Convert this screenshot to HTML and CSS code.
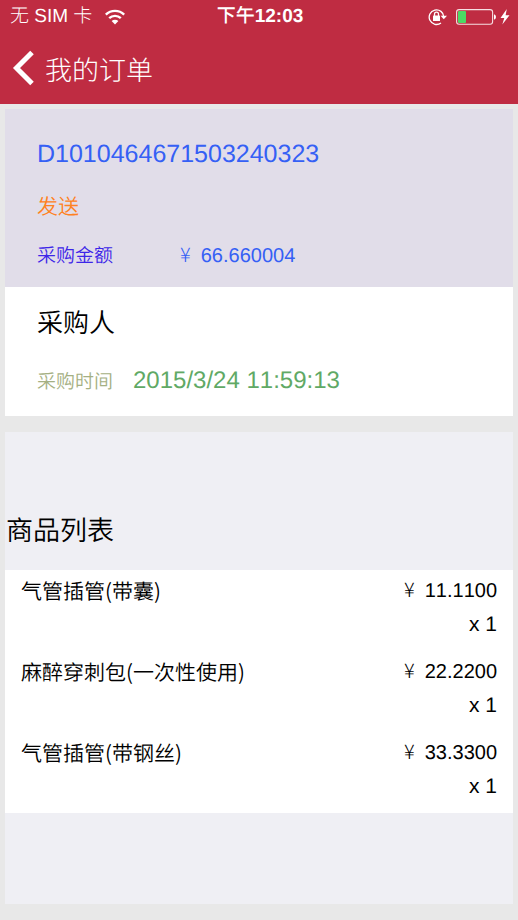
FILE: index.html
```html
<!DOCTYPE html>
<html lang="zh-CN">
<head>
<meta charset="utf-8">
<meta name="viewport" content="width=device-width, initial-scale=1">
<title>我的订单</title>
<link rel="stylesheet" href="styles.css">
</head>
<body>
<header class="top">
  <div class="status">
    <div class="status-left">
      <span>无 SIM 卡</span>
      <svg width="20" height="16" viewBox="0 0 20 16" fill="none" stroke="#fff" stroke-width="2.4" aria-hidden="true">
        <path d="M.8 5.6A13.2 13.2 0 0 1 19.200 5.600"/>
        <path d="M4.200 9.200A8.400 8.400 0 0 1 15.800 9.200"/>
        <path d="M10 15.400L6.600 12A4.900 4.900 0 0 1 13.400 12Z" fill="#fff" stroke="none"/>
      </svg>
    </div>
    <time class="clock"><span class="period">下午</span>12:03</time>
    <div class="status-right">
      <svg width="20" height="18" viewBox="0 0 20 18" fill="none" stroke="#fff" stroke-width="1.300" aria-hidden="true">
        <path d="M13 14.900A7.300 7.300 0 1 1 15.800 9"/>
        <path d="M12.600 7.700H19L15.800 11.300Z" fill="#fff" stroke="none"/>
        <rect x="5" y="7.600" width="7" height="5.400" rx=".6" fill="#fff" stroke="none"/>
        <path d="M6.500 8V6.200A2 2 0 0 1 10.500 6.200V8"/>
      </svg>
      <span class="power">
        <svg width="40" height="16" viewBox="0 0 40 16" fill="none" aria-hidden="true">
          <rect x=".6" y=".6" width="36" height="14.600" rx="2.500" stroke="#fff" stroke-opacity=".85" stroke-width="1.100"/>
          <rect x="2" y="2" width="8" height="12" rx="1" fill="#4cd964"/>
          <path d="M38 5.200Q40 5.800 40 8T38 10.800Z" fill="#fff"/>
        </svg>
        <svg width="10" height="16" viewBox="0 0 10 16" fill="#fff" aria-hidden="true">
          <path d="M6.800 0L.5 9H4.300L2.300 15.500L9.500 6.300H5.600Z"/>
        </svg>
      </span>
    </div>
  </div>
  <nav class="nav">
    <a class="back" href="#">
      <svg width="22" height="36" viewBox="0 0 22 36" fill="none" stroke="#fff" stroke-width="5" aria-hidden="true">
        <path d="M20 2.500L4.500 18L20 33.500"/>
      </svg>
      <span>我的订单</span>
    </a>
  </nav>
</header>
<main class="page">
  <section class="order">
    <div class="summary">
      <h1 class="order-id">D1010464671503240323</h1>
      <p class="state">发送</p>
      <dl class="amount">
        <dt>采购金额</dt>
        <dd><span class="yen">¥</span>66.660004</dd>
      </dl>
    </div>
    <div class="buyer">
      <h2 class="buyer-name">采购人</h2>
      <dl class="date">
        <dt>采购时间</dt>
        <dd>2015/3/24 11:59:13</dd>
      </dl>
    </div>
  </section>
  <section class="goods">
    <h2 class="goods-title">商品列表</h2>
    <ul class="items">
      <li class="item"><span class="name">气管插管(带囊)</span><span class="price"><span class="yen">¥</span>11.1100</span><span class="count">x 1</span></li>
      <li class="item"><span class="name">麻醉穿刺包(一次性使用)</span><span class="price"><span class="yen">¥</span>22.2200</span><span class="count">x 1</span></li>
      <li class="item"><span class="name">气管插管(带钢丝)</span><span class="price"><span class="yen">¥</span>33.3300</span><span class="count">x 1</span></li>
    </ul>
  </section>
</main>
</body>
</html>
```
FILE: styles.css
```css
* {
  box-sizing: border-box;
  margin: 0;
  padding: 0;
}

body {
  background: #e8e8e8;
  color: #000;
  font-family: "Liberation Sans", "Noto Sans CJK SC", sans-serif;
  font-weight: 350;
  font-kerning: none;
  text-rendering: geometricPrecision;
}

h1,
h2 {
  font-weight: 350;
}

svg {
  display: block;
  flex: none;
}

.top {
  background: #bf2c42;
  color: #fff;
  font-weight: 300;
}

.status {
  display: grid;
  grid-template-columns: 1fr auto 1fr;
  align-items: center;
  height: 34px;
  padding: 0 8px 0 10px;
  font-size: 19px;
  line-height: 34px;
}

.status-left,
.status-right,
.power {
  display: flex;
  align-items: center;
}

.status-left {
  gap: 13px;
}

.status-right {
  justify-content: flex-end;
  gap: 8px;
}

.power {
  gap: 4px;
}

.clock {
  font-weight: 600;
}

.period {
  font-weight: 500;
}

.nav {
  height: 70px;
  padding: 0 12px;
}

.back {
  display: inline-flex;
  align-items: center;
  gap: 11px;
  height: 68px;
  color: #fff;
  font-size: 27px;
  text-decoration: none;
}

.page {
  padding: 5px 5px 16px;
}

.order {
  background: #fff;
}

.summary {
  padding: 27px 32px 14px;
  background: #e1dde9;
}

.order-id {
  color: #3560f5;
  font-size: 25px;
  line-height: 36px;
}

.state {
  margin-top: 18px;
  color: #ff8122;
  font-size: 21px;
  line-height: 36px;
}

.amount,
.date {
  display: flex;
  align-items: baseline;
}

.amount {
  margin-top: 14px;
  gap: 67px;
  color: #3560f5;
  font-size: 20px;
  line-height: 32px;
}

.amount dt {
  color: #3d26e8;
  font-size: 19px;
}

.yen {
  margin-right: 10px;
  font-family: "Noto Sans CJK SC", sans-serif;
  font-size: 20px;
  font-weight: 300;
  line-height: 1;
}

.buyer {
  padding: 18px 32px 15px;
}

.buyer-name {
  font-size: 26px;
  line-height: 36px;
}

.date {
  margin-top: 22px;
  gap: 20px;
  color: #60a965;
  font-size: 24px;
  line-height: 36px;
}

.date dt {
  color: #a5b083;
  font-size: 19px;
}

.goods {
  margin-top: 16px;
  padding: 79px 0 91px;
  background: #efeff4;
}

.goods-title {
  padding: 0 1px 19px;
  font-size: 27px;
  line-height: 40px;
}

.items {
  background: #fff;
  list-style: none;
}

.item {
  display: grid;
  grid-template-columns: 1fr auto;
  padding: 5px 16px 10px;
  font-size: 20px;
  line-height: 33px;
}

.name {
  font-family: "Noto Sans CJK SC", sans-serif;
  font-size: 21px;
}

.price,
.count {
  text-align: right;
}

.count {
  grid-column: 2;
  font-size: 21px;
}
```
